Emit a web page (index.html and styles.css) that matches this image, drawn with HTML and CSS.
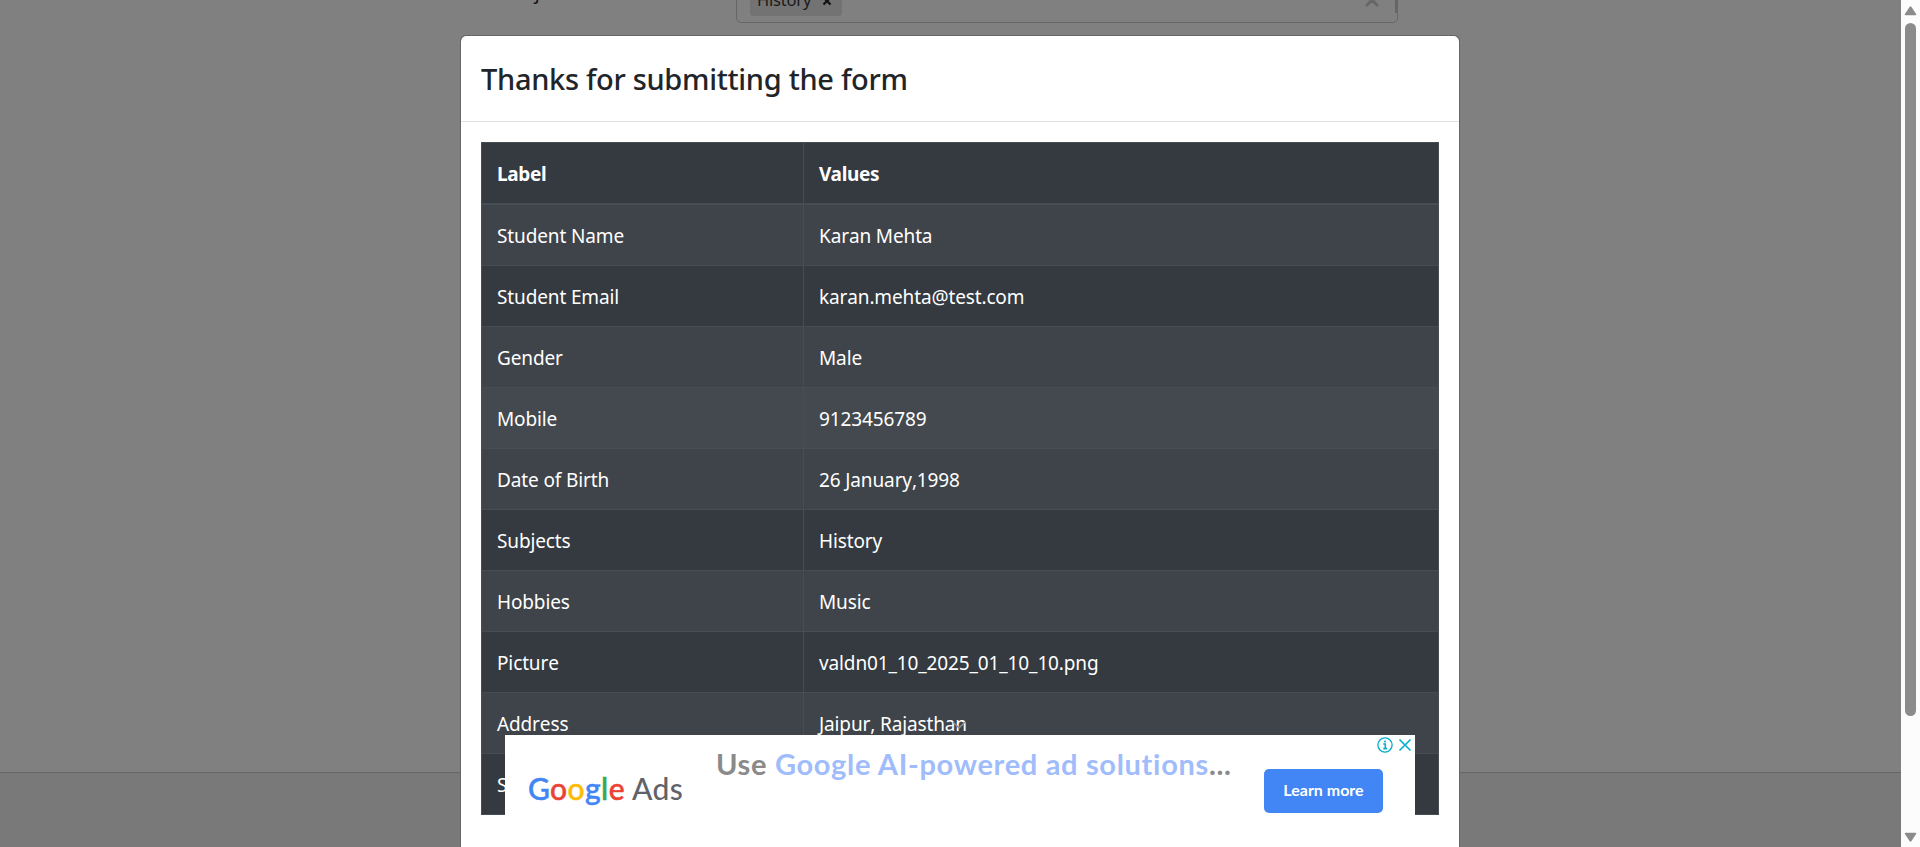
FILE: index.html
```html
<!DOCTYPE html>
<html lang="en">
<head>
<meta charset="utf-8">
<title>Practice Form</title>
<link rel="stylesheet" href="styles.css">
</head>
<body>
<div class="page">
  <div class="form-row">
    <span class="form-label">Subjects</span>
    <div class="select">
      <span class="tag">History <svg class="tag-x" width="10" height="10" viewBox="0 0 10 10"><path d="M1.500 1.500l7 7M8.500 1.500l-7 7" stroke="#111" stroke-width="2.200"/></svg></span>
      <svg class="clear" width="16" height="16" viewBox="0 0 16 16"><path d="M3 3l10 10M13 3L3 13" stroke="#666" stroke-width="3" stroke-linecap="round"/></svg>
      <span class="divider"></span>
    </div>
  </div>
  <footer class="footer"></footer>
</div>

<div class="scrollbar">
  <svg width="13" height="10" viewBox="0 0 13 10"><path d="M6.500 1L11.500 8.500H1.500Z" fill="#8b8b8b" stroke="#8b8b8b" stroke-width="1.500" stroke-linejoin="round"/></svg>
  <div class="thumb"></div>
  <svg class="down" width="13" height="10" viewBox="0 0 13 10"><path d="M6.500 9L11.500 1.500H1.500Z" fill="#8b8b8b" stroke="#8b8b8b" stroke-width="1.500" stroke-linejoin="round"/></svg>
</div>

<div class="modal">
  <div class="modal-header"><span class="title">Thanks for submitting the form</span></div>
  <div class="modal-body">
    <table class="table">
      <thead><tr><th>Label</th><th>Values</th></tr></thead>
      <tbody>
        <tr><td>Student Name</td><td>Karan Mehta</td></tr>
        <tr><td>Student Email</td><td>karan.mehta@test.com</td></tr>
        <tr><td>Gender</td><td>Male</td></tr>
        <tr class="hover"><td>Mobile</td><td>9123456789</td></tr>
        <tr><td>Date of Birth</td><td>26 January,1998</td></tr>
        <tr><td>Subjects</td><td>History</td></tr>
        <tr><td>Hobbies</td><td>Music</td></tr>
        <tr><td>Picture</td><td>valdn01_10_2025_01_10_10.png</td></tr>
        <tr><td>Address</td><td>Jaipur, Rajasthan</td></tr>
        <tr><td>S</td><td></td></tr>
      </tbody>
    </table>
  </div>
</div>

<div class="ad">
  <svg class="chevron" width="16" height="10" viewBox="0 0 16 10"><path d="M2 2l6 6 6-6" fill="none" stroke="#8a8d91" stroke-width="1.500"/></svg>
  <div class="logo"><span class="b">G</span><span class="r">o</span><span class="y">o</span><span class="b">g</span><span class="g">l</span><span class="r">e</span> <span class="ads">Ads</span></div>
  <div class="headline">Use <span class="blue">Google AI-powered ad solutions</span>...</div>
  <div class="cta">Learn more</div>
  <div class="choices">
    <svg width="16" height="16" viewBox="0 0 16 16" fill="none" stroke="#00aecd"><circle cx="8" cy="8" r="7.100" stroke-width="1.300"/><path d="M6.300 7H8.300V11.600M6.300 11.600H10M8 3.600V5.400" stroke-width="1.600"/></svg>
    <svg width="16" height="16" viewBox="0 0 16 16" fill="none" stroke="#00aecd" stroke-width="1.600"><path d="M2.500 2.500l11 11M13.500 2.500l-11 11"/></svg>
  </div>
</div>
</body>
</html>
```

FILE: styles.css
```css
* { box-sizing: border-box; }
html { height: 847px; overflow: hidden; }
body {
  margin: 0;
  height: 847px;
  overflow: hidden;
  position: relative;
  font-family: "Noto Sans", sans-serif;
  font-size: 19px;
  background: #808080;
}
.page { width: 1901px; height: 847px; display: flex; flex-direction: column; justify-content: space-between; }
.form-row { display: flex; height: 23px; padding-left: 501px; overflow: hidden; }
.form-label { width: 235px; margin-top: -21px; font-size: 19px; line-height: 26px; color: #111315; }
.select {
  width: 662px; height: 48px; margin-top: -25px;
  border: 1px solid #666; border-radius: 5px;
  display: flex; align-items: center;
}
.tag { margin-left: 13px; background: #737373; border-radius: 3px; width: 92px; height: 34px; padding-left: 7px; font-size: 16.5px; line-height: 36px; letter-spacing: -0.2px; color: #1a1a1a; white-space: nowrap; }
.tag-x { margin-left: 7px; }
.clear { margin-left: auto; margin-right: 15px; position: relative; top: 1px; }
.divider { width: 2px; height: 28px; background: #666; }
.footer { height: 75px; border-top: 1px solid #666; background: #797979; }

.scrollbar {
  position: absolute; right: 0; top: 0; width: 19px; height: 847px;
  background: #fcfcfc; display: flex; flex-direction: column; align-items: center; padding: 6px 0 5px;
}
.thumb { width: 11px; height: 693px; margin-top: 7px; border-radius: 6px; background: #8b8b8b; }
.down { margin-top: auto; }

.modal {
  position: absolute; left: 460px; top: 35px; width: 1000px; height: 812px;
  background: #fff; background-clip: padding-box; border: 1px solid #666; border-bottom: 0; border-radius: 6px 6px 0 0;
}
.modal-header { height: 86px; padding: 0 20px; border-bottom: 1px solid #dee2e6; display: flex; align-items: center; }
.title { font-size: 29px; font-weight: 500; letter-spacing: -0.3px; color: #212529; white-space: nowrap; padding-bottom: 1px; }
.modal-body { padding: 20px; }
.table {
  width: 958px; table-layout: fixed; border-collapse: separate; border-spacing: 0;
  border-top: 1px solid #454d55; border-left: 1px solid #454d55;
  background: #343a40; color: #fff; letter-spacing: -0.13px; font-kerning: none;
}
.table th, .table td {
  height: 61px; padding: 2px 15px 0; text-align: left; white-space: nowrap;
  border-right: 1px solid #454d55; border-bottom: 1px solid #454d55;
}
.table th { height: 62px; border-bottom-width: 2px; font-weight: 700; font-kerning: auto; letter-spacing: -0.35px; }
.table th:first-child { width: 322px; }
.table tbody tr:nth-child(odd) { background: #3f444a; }
.table tbody tr.hover { background: #43494e; }

.ad { position: absolute; left: 505px; top: 735px; width: 910px; height: 112px; background: #fff; }
.chevron { position: absolute; left: 446px; top: -15px; }
.logo { position: absolute; left: 23px; top: 32px; font: 500 30px/42px Lato, sans-serif; -webkit-text-stroke: 0.5px; letter-spacing: 0.4px; white-space: nowrap; }
.b { color: #4285f4; } .r { color: #ea4335; } .y { color: #fbbc04; } .g { color: #34a853; } .ads { color: #5f6368; -webkit-text-stroke: 0; }
.headline { position: absolute; left: 211px; top: 10px; font: 700 29px/38px Lato, sans-serif; letter-spacing: 0.68px; font-variant-ligatures: none; color: #8a8a8a; white-space: nowrap; }
.blue { color: #a0bcfa; }
.cta { position: absolute; left: 759px; top: 34px; width: 119px; height: 44px; border-radius: 5px; background: #4285f4; color: #fff; font: 700 16px/42px Lato, sans-serif; text-align: center; }
.choices { position: absolute; right: 2px; top: 2px; display: flex; gap: 4px; }
```
